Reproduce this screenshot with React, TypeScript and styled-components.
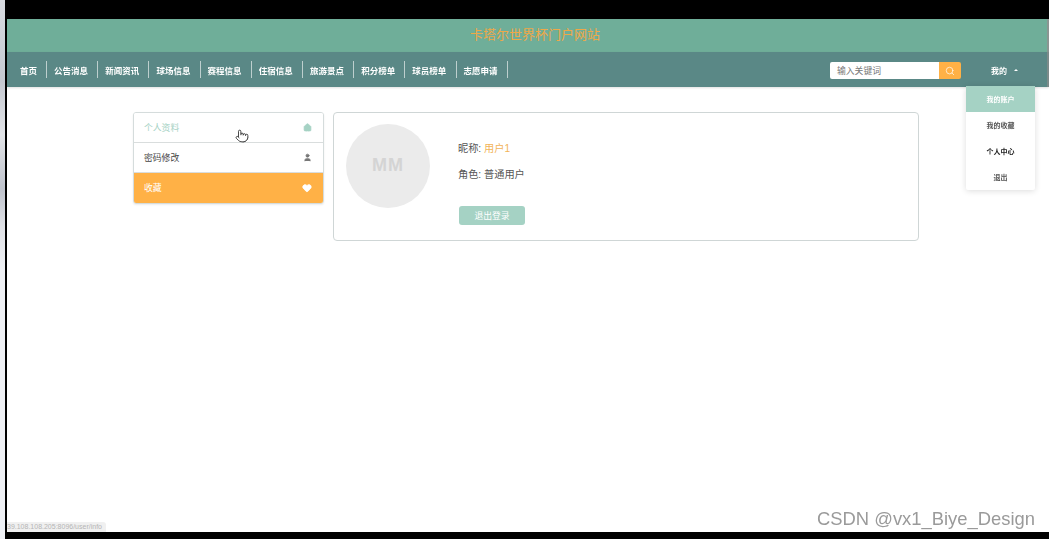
import React from "react";
import styled, { createGlobalStyle } from "styled-components";
import { Home, Pointer, Search, User, Heart } from "lucide-react";

const GlobalStyle = createGlobalStyle`
  html, body {
    margin: 0;
    padding: 0;
    background: #000;
  }
  * {
    box-sizing: border-box;
  }
  body {
    font-family: "Liberation Sans", "Noto Sans CJK SC", sans-serif;
  }
`;

const Screen = styled.div`
  position: relative;
  width: 1049px;
  height: 539px;
  overflow: hidden;
  display: flex;
  flex-direction: column;
  background: #000;
`;

const Middle = styled.div`
  flex: 1;
  display: flex;
  padding-top: 19px;
  padding-bottom: 7px;
`;

const Gutter = styled.div`
  width: 5px;
  margin-top: -19px;
  margin-bottom: -7px;
  flex-shrink: 0;
  background: linear-gradient(
    to bottom,
    #d8dbe0 0,
    #c4c8d0 15%,
    #e2e4e8 25%,
    #bfc3cc 35%,
    #dfe1e6 42%,
    #eef0f4 50%,
    #eef0f4 100%
  );
`;

const Page = styled.div`
  position: relative;
  flex: 1;
  margin-left: 2px;
  background: #fff;
  display: flex;
  flex-direction: column;
  filter: blur(0.35px);
`;

const TitleBar = styled.div`
  height: 33px;
  background: #6fae99;
  color: #eea848;
  font-size: 13px;
  display: flex;
  align-items: center;
  justify-content: center;
  padding: 0 0 4px 16px;
  border-right: 2px solid #8a9692;
`;

const NavBar = styled.div`
  position: relative;
  height: 35px;
  background: #5a8886;
  display: flex;
  align-items: center;
  padding: 0 14px 0 4px;
  border-right: 2px solid #7c8b8a;
  box-shadow: 0 1px 2px rgba(0, 0, 0, 0.12);
`;

const NavLinks = styled.nav`
  display: flex;
  align-items: center;
`;

const NavLink = styled.a<{ $first?: boolean }>`
  width: ${(p) => (p.$first ? "36px" : "51.2px")};
  height: 17px;
  padding-left: ${(p) => (p.$first ? "9px" : "7px")};
  display: flex;
  align-items: center;
  color: #fff;
  font-size: 8.5px;
  font-weight: 700;
  white-space: nowrap;
  border-right: 1px solid rgba(255, 255, 255, 0.6);
`;

const SearchBox = styled.div`
  margin-left: auto;
  margin-top: 2px;
  display: flex;
  width: 131px;
  height: 17px;
  border-radius: 2px;
  overflow: hidden;
`;

const SearchInput = styled.div`
  flex: 1;
  background: #fff;
  color: #777;
  font-size: 8.8px;
  padding-left: 7px;
  display: flex;
  align-items: center;
`;

const SearchButton = styled.div`
  width: 22px;
  background: #ffb146;
  color: #fff;
  display: flex;
  align-items: center;
  justify-content: center;
`;

const UserMenu = styled.div`
  width: 72px;
  padding-left: 30px;
  margin-top: 1px;
  display: flex;
  align-items: center;
  gap: 7px;
  color: #fff;
  font-size: 8px;
  font-weight: 700;
`;

const Caret = styled.span`
  width: 0;
  height: 0;
  border-left: 2px solid transparent;
  border-right: 2px solid transparent;
  border-bottom: 2px solid #fff;
`;

const Dropdown = styled.div`
  position: absolute;
  top: 67px;
  left: 959px;
  width: 69px;
  background: #fff;
  border-radius: 2px;
  box-shadow: 0 1px 6px rgba(0, 0, 0, 0.14);
  z-index: 2;
`;

const DropItem = styled.div<{ $active?: boolean; $dark?: boolean }>`
  height: 26px;
  padding-bottom: 1px;
  display: flex;
  align-items: center;
  justify-content: center;
  font-size: 7px;
  font-weight: 700;
  background: ${(p) => (p.$active ? "#a5d2c4" : "transparent")};
  color: ${(p) => (p.$active ? "#fff" : p.$dark ? "#222" : "#555")};
`;

const Content = styled.main`
  flex: 1;
  display: flex;
  align-items: flex-start;
  gap: 9px;
  padding: 25px 0 0 126px;
`;

const Sidebar = styled.aside`
  width: 191px;
  border: 1px solid #d5dcdc;
  border-radius: 3px;
  overflow: hidden;
  box-shadow: 0 1px 2px rgba(0, 0, 0, 0.08);
`;

const SideRow = styled.div<{ $tone: "mint" | "plain" | "orange" }>`
  height: 30px;
  display: flex;
  align-items: center;
  justify-content: space-between;
  padding: 0 11px ${(p) => (p.$tone === "orange" ? "1px" : "0")} 10px;
  font-size: 8.8px;
  background: ${(p) => (p.$tone === "orange" ? "#ffb146" : "#fff")};
  color: ${(p) =>
    p.$tone === "orange" ? "#fff" : p.$tone === "mint" ? "#a5d2c4" : "#444"};
  border-bottom: ${(p) => (p.$tone === "orange" ? "0" : "1px solid #d9dddd")};
`;

const RowIcon = styled.span<{ $tone: "mint" | "plain" | "orange" }>`
  display: flex;
  color: ${(p) =>
    p.$tone === "orange" ? "#fff" : p.$tone === "mint" ? "#a5d2c4" : "#777"};
  svg {
    fill: currentColor;
  }
`;

const ProfileCard = styled.section`
  width: 586px;
  height: 129px;
  border: 1px solid #cfd6d6;
  border-radius: 4px;
  padding: 11px 12px;
  display: flex;
  gap: 29px;
`;

const Avatar = styled.div`
  width: 84px;
  height: 84px;
  padding-bottom: 2px;
  border-radius: 50%;
  background: #ebebeb;
  color: #d4d4d4;
  font-size: 18px;
  font-weight: 700;
  letter-spacing: 1px;
  display: flex;
  align-items: center;
  justify-content: center;
`;

const Info = styled.div`
  padding-top: 18px;
  display: flex;
  flex-direction: column;
  align-items: flex-start;
`;

const InfoLine = styled.div`
  height: 26px;
  margin-left: -1px;
  color: #555;
  font-size: 10.2px;
  line-height: 13px;
`;

const Accent = styled.span`
  color: #f2b45a;
`;

const LogoutButton = styled.button`
  margin-top: 12px;
  width: 66px;
  height: 19px;
  border: 0;
  border-radius: 3px;
  padding: 0;
  background: #a5d2c4;
  color: #fff;
  font-family: inherit;
  font-size: 8.8px;
`;

const Cursor = styled.span`
  position: absolute;
  left: 228px;
  top: 110px;
  display: flex;
  color: #222;
  svg {
    fill: #fff;
  }
`;

const StatusUrl = styled.div`
  position: absolute;
  left: 0;
  bottom: 0;
  width: 99px;
  height: 10px;
  background: #f0f0f0;
  color: #b5b5b5;
  font-size: 7px;
  line-height: 10px;
  border-top-right-radius: 3px;
  white-space: nowrap;
  overflow: hidden;
`;

const Watermark = styled.div`
  position: absolute;
  left: 817px;
  top: 508px;
  color: #9a9a9a;
  font-size: 18.4px;
  line-height: 22px;
  white-space: nowrap;
`;

const navItems = [
  "首页",
  "公告消息",
  "新闻资讯",
  "球场信息",
  "赛程信息",
  "住宿信息",
  "旅游景点",
  "积分榜单",
  "球员榜单",
  "志愿申请",
];

const App: React.FC = () => {
  return (
    <Screen>
      <GlobalStyle />
      <Middle>
        <Gutter />
        <Page>
          <TitleBar>卡塔尔世界杯门户网站</TitleBar>
          <NavBar>
            <NavLinks>
              {navItems.map((item, i) => (
                <NavLink key={item} $first={i === 0}>
                  {item}
                </NavLink>
              ))}
            </NavLinks>
            <SearchBox>
              <SearchInput>输入关键词</SearchInput>
              <SearchButton>
                <Search size={10} strokeWidth={1.6} />
              </SearchButton>
            </SearchBox>
            <UserMenu>
              我的
              <Caret />
            </UserMenu>
          </NavBar>
          <Dropdown>
            <DropItem $active>我的账户</DropItem>
            <DropItem>我的收藏</DropItem>
            <DropItem $dark>个人中心</DropItem>
            <DropItem>退出</DropItem>
          </Dropdown>
          <Content>
            <Sidebar>
              <SideRow $tone="mint">
                个人资料
                <RowIcon $tone="mint">
                  <Home size={9} />
                </RowIcon>
              </SideRow>
              <SideRow $tone="plain">
                密码修改
                <RowIcon $tone="plain">
                  <User size={9} />
                </RowIcon>
              </SideRow>
              <SideRow $tone="orange">
                收藏
                <RowIcon $tone="orange">
                  <Heart size={10} />
                </RowIcon>
              </SideRow>
            </Sidebar>
            <ProfileCard>
              <Avatar>MM</Avatar>
              <Info>
                <InfoLine>
                  昵称: <Accent>用户1</Accent>
                </InfoLine>
                <InfoLine>角色: 普通用户</InfoLine>
                <LogoutButton>退出登录</LogoutButton>
              </Info>
            </ProfileCard>
          </Content>
          <Cursor>
            <Pointer size={14} strokeWidth={1.4} />
          </Cursor>
          <StatusUrl>39.108.108.205:8096/user/info</StatusUrl>
        </Page>
      </Middle>
      <Watermark>CSDN @vx1_Biye_Design</Watermark>
    </Screen>
  );
};

export default App;
